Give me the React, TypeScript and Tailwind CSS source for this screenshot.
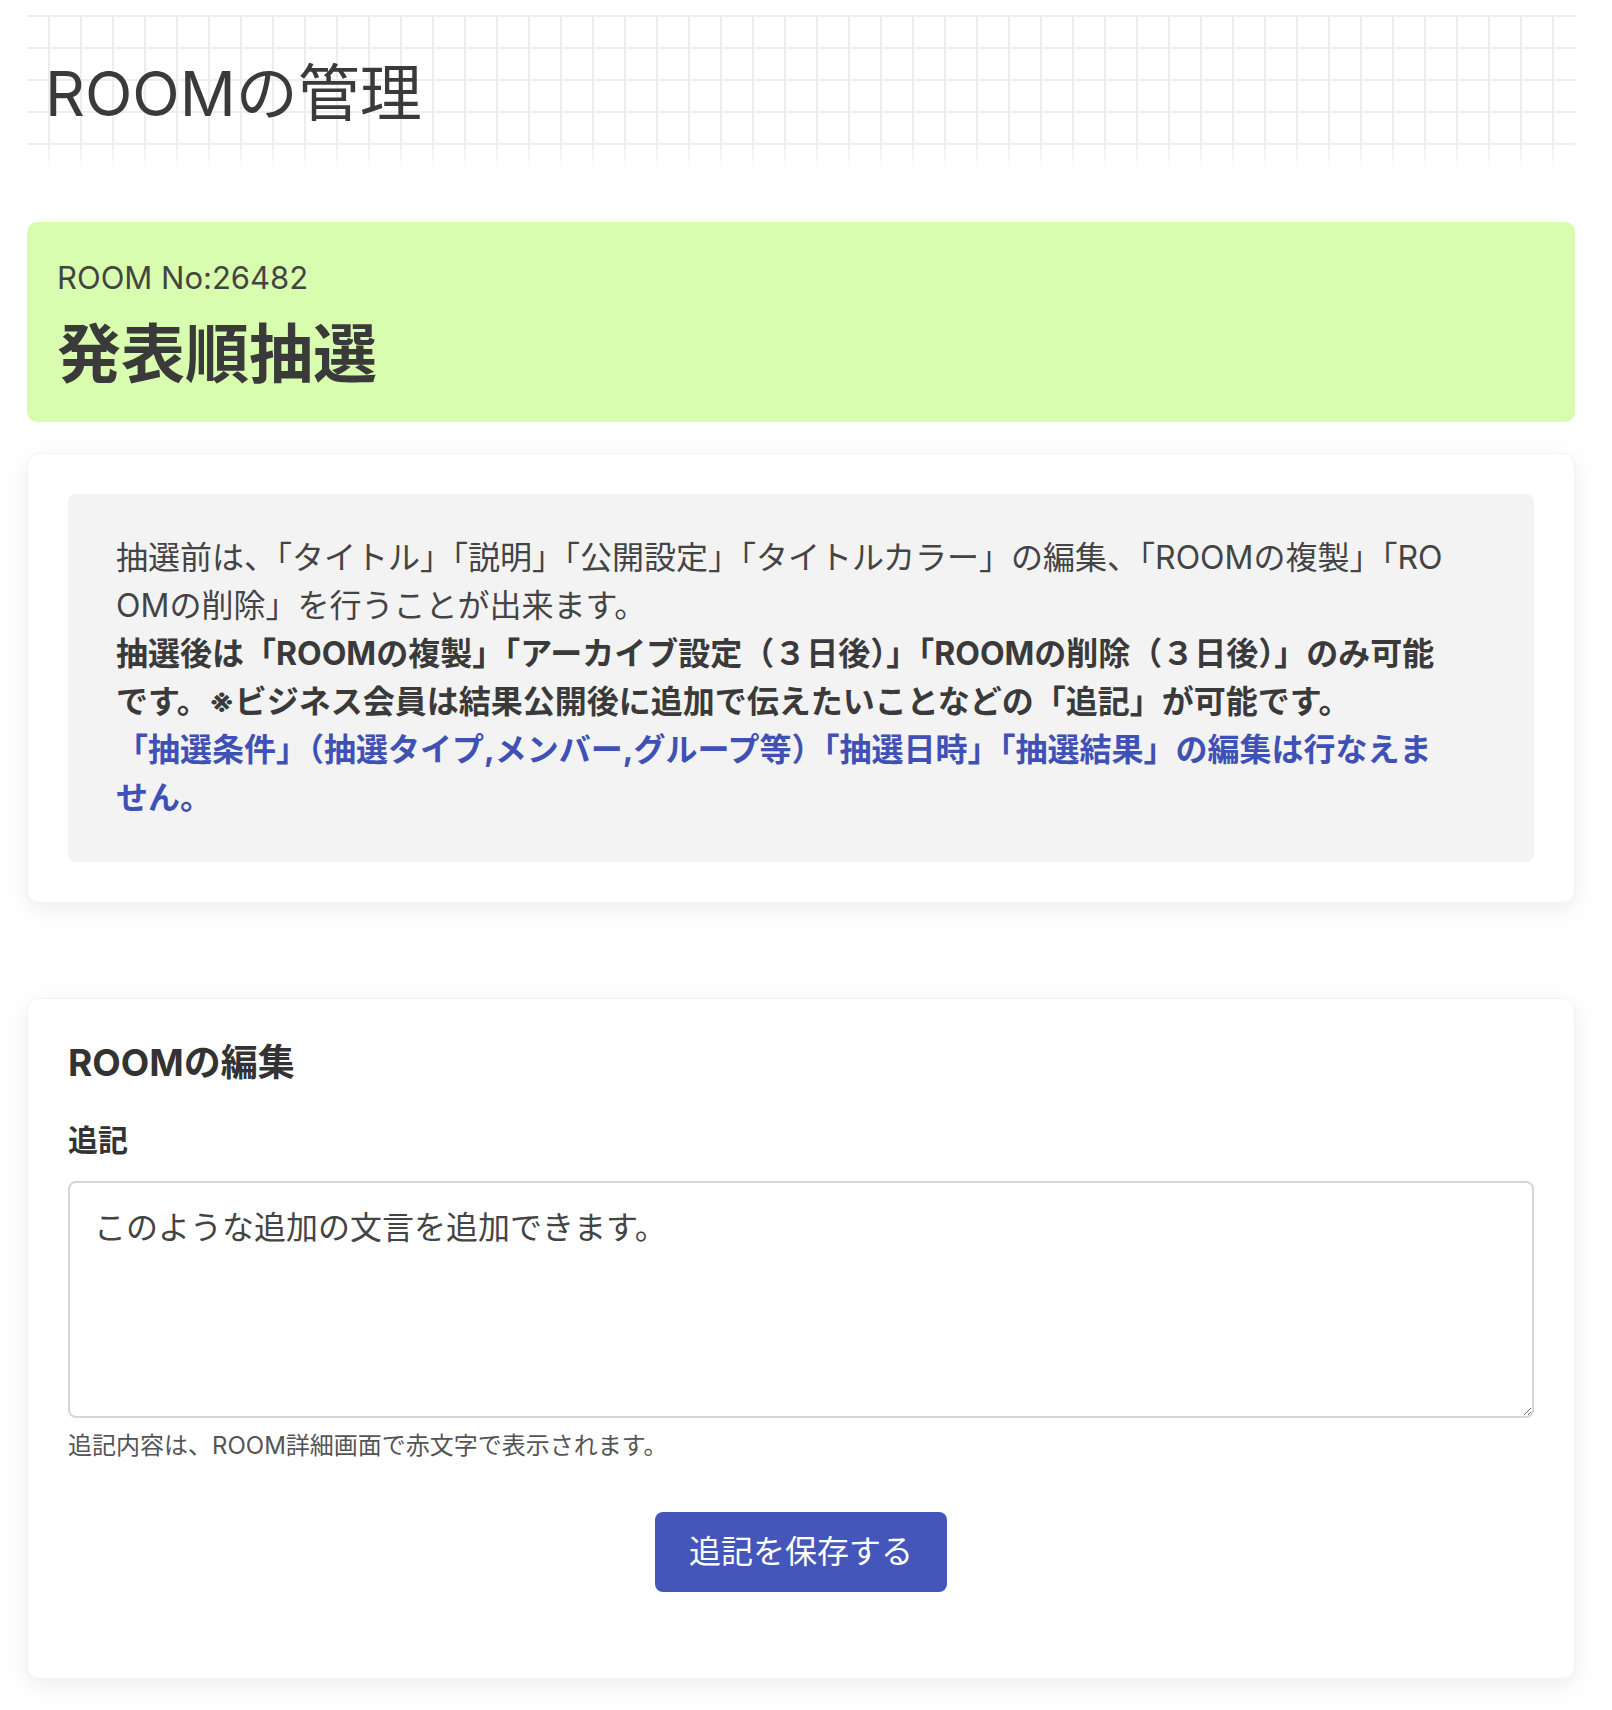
export default function App() {
  return (
    <div className="min-h-screen bg-white pt-[15px] pb-[32px] font-['Inter','Noto_Sans_CJK_JP',sans-serif] text-[#444]">
      <div className="ml-[27px] w-[1548px]">
        {/* Header with grid */}
        <div className="h-[158px] flex items-center pl-[18px] bg-[linear-gradient(#ededed_2px,transparent_2px),linear-gradient(90deg,#ededed_2px,transparent_2px)] bg-[size:32px_32px] [background-position:0_0,21px_0] [mask-image:linear-gradient(to_bottom,black_80%,transparent)]">
          <h1 className="text-[62px] leading-[72px] font-normal text-[#3a3a3a]">
            ROOMの管理
          </h1>
        </div>

        {/* Room title */}
        <div className="mt-[49px] rounded-[10px] bg-[#d9fdae] pl-[30px] pt-[32px] pb-[30px]">
          <p className="text-[31px] leading-[48px] text-[#444]">
            ROOM No:26482
          </p>
          <h2 className="mt-[13px] text-[64px] leading-[77px] font-bold text-[#3a3a3a]">
            発表順抽選
          </h2>
        </div>

        {/* Notice */}
        <div className="mt-[31px] rounded-[12px] bg-white border border-[#f3f3f3] p-[40px] shadow-[0_6px_24px_rgba(0,0,0,0.08)]">
          <div className="rounded-[8px] bg-[#f3f3f3] py-[40px] pl-[48px] pr-[88px] text-[32px] leading-[48px] break-all">
            <p className="text-[#444]">
              抽選前は、「タイトル」「説明」「公開設定」「タイトルカラー」の編集、「ROOMの複製」「ROOMの削除」を行うことが出来ます。
            </p>
            <p className="font-bold text-[#3a3a3a]">
              抽選後は「ROOMの複製」「アーカイブ設定（３日後）」「ROOMの削除（３日後）」のみ可能です。※ビジネス会員は結果公開後に追加で伝えたいことなどの「追記」が可能です。
            </p>
            <p className="font-bold text-[#3f51b5]">
              「抽選条件」（抽選タイプ,メンバー,グループ等）「抽選日時」「抽選結果」の編集は行なえません。
            </p>
          </div>
        </div>

        {/* Edit */}
        <div className="mt-[95px] rounded-[12px] bg-white border border-[#f3f3f3] px-[40px] pt-[39px] pb-[86px] shadow-[0_6px_24px_rgba(0,0,0,0.08)]">
          <h3 className="text-[37px] leading-[50px] font-bold text-[#333]">
            ROOMの編集
          </h3>
          <label className="mt-[30px] block text-[30px] leading-[44px] font-bold text-[#333]">
            追記
          </label>
          <textarea
            className="mt-[19px] block w-full h-[237px] rounded-[8px] border-2 border-[#d6d6d6] bg-white px-[24px] pt-[21px] text-[32px] leading-[48px] text-[#444] outline-none"
            defaultValue="このような追加の文言を追加できます。"
          />
          <p className="mt-[10px] text-[24px] leading-[36px] text-[#555]">
            追記内容は、ROOM詳細画面で赤文字で表示されます。
          </p>
          <div className="mt-[48px] flex justify-center">
            <button
              type="button"
              className="h-[80px] w-[292px] rounded-[8px] bg-[#4456b9] text-[32px] text-white"
            >
              追記を保存する
            </button>
          </div>
        </div>
      </div>
    </div>
  );
}
